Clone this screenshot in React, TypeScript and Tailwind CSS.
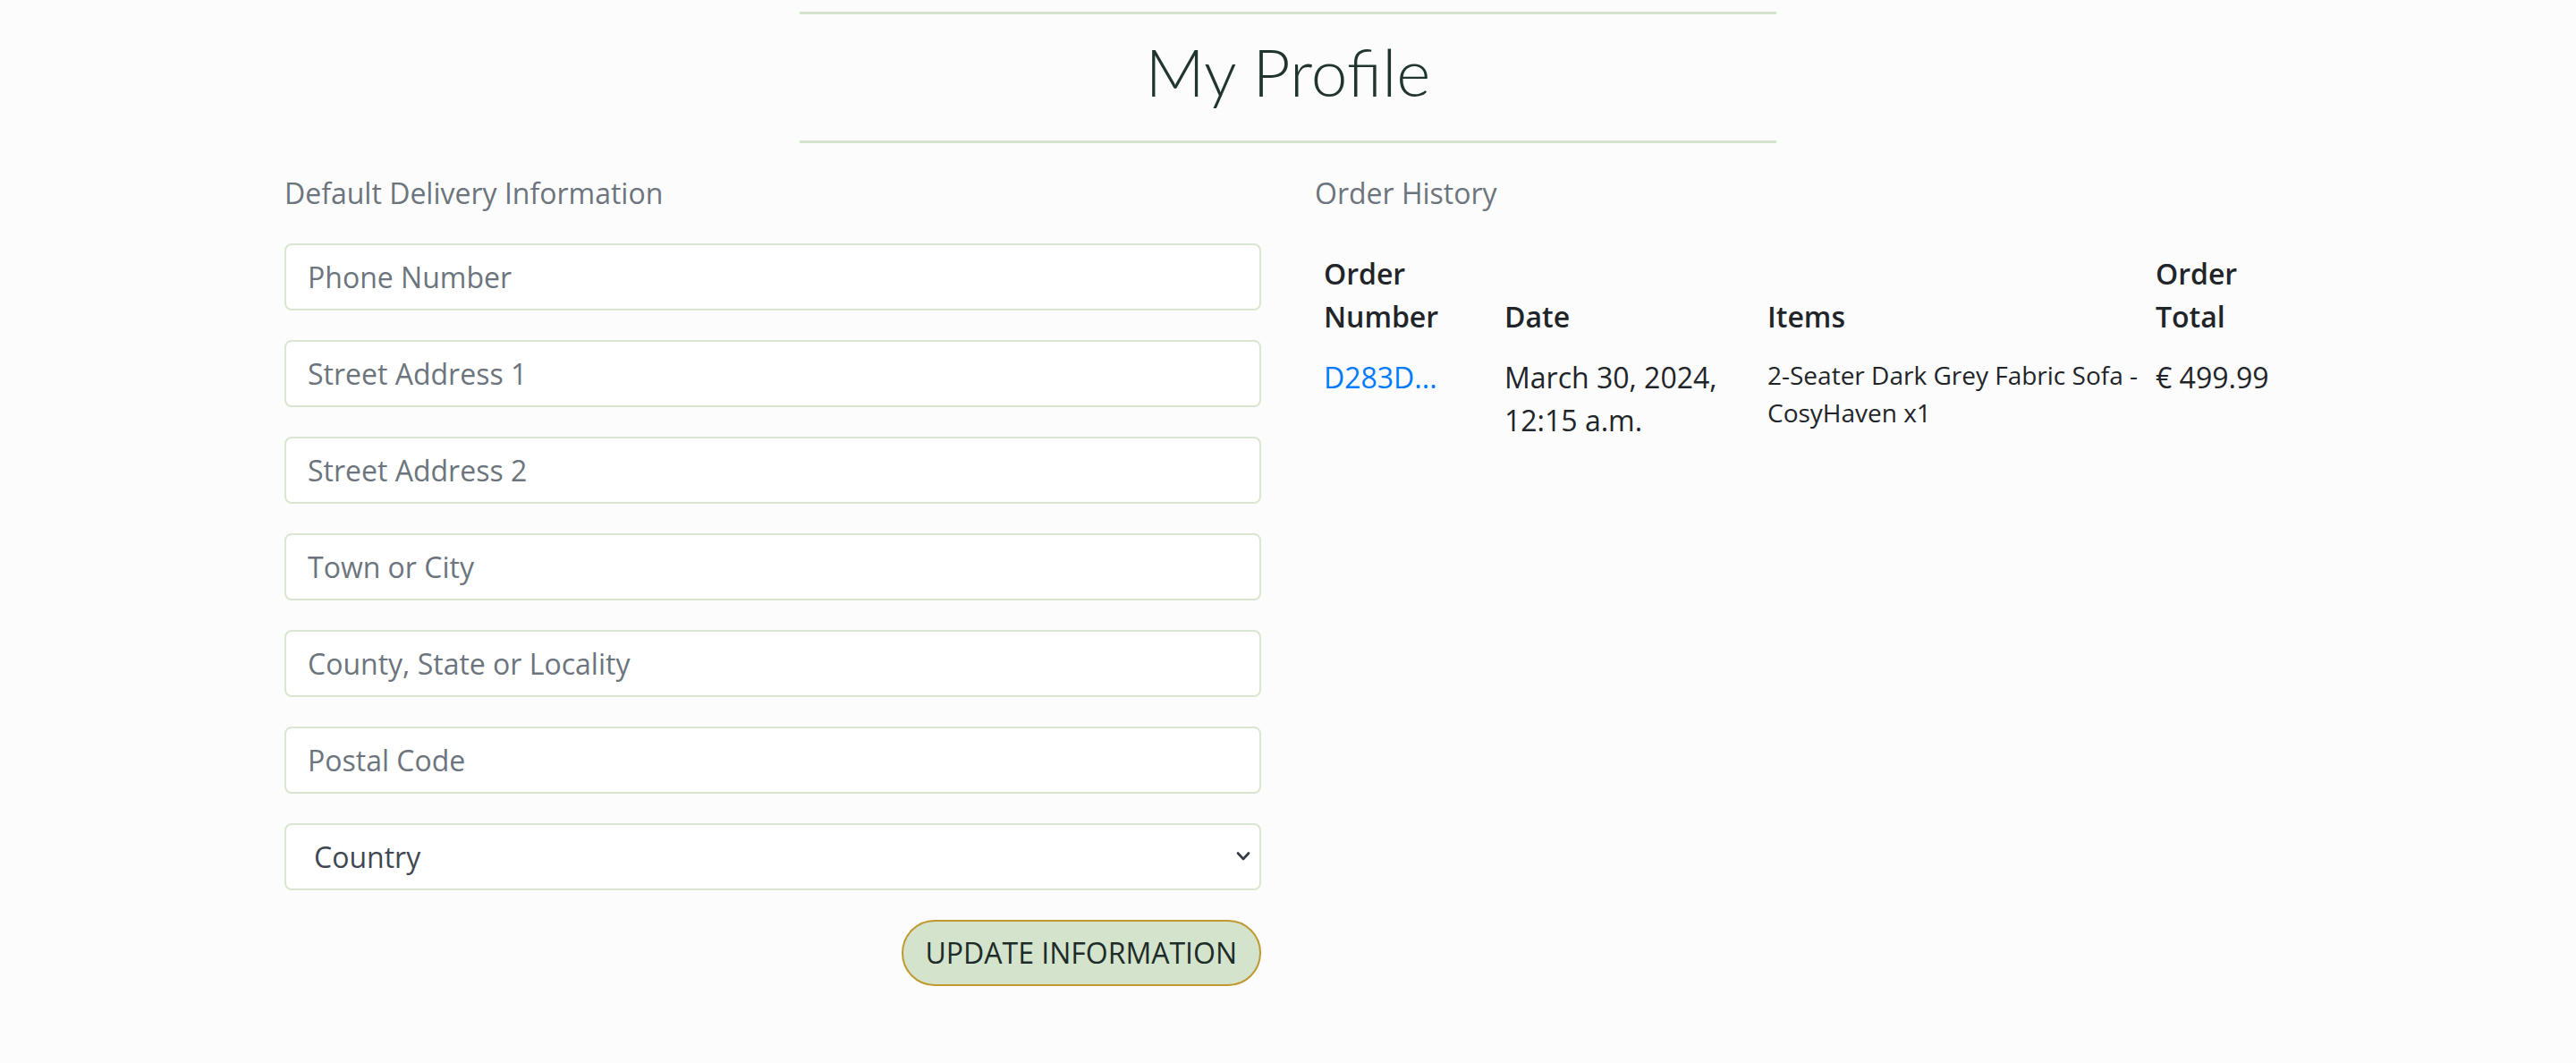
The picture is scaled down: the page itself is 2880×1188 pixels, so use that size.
import React from "react"

const fields = [
  "Phone Number",
  "Street Address 1",
  "Street Address 2",
  "Town or City",
  "County, State or Locality",
  "Postal Code",
]

function ProfileForm() {
  return (
    <div className="px-[30px]">
      <p className="text-[32px] leading-[48px] text-[#6c757d] mb-[32px]">Default Delivery Information</p>
      <form className="flex flex-col gap-[33px]">
        {fields.map((f) => (
          <input
            key={f}
            type="text"
            placeholder={f}
            className="h-[75px] w-full rounded-[8px] border-2 border-[#d9e6d1] bg-white pl-[24px] pr-[24px] text-[32px] leading-[48px] text-[#495057] placeholder:text-[#6c757d] outline-none"
          />
        ))}
        <div className="relative">
          <select
            defaultValue=""
            className="h-[75px] w-full appearance-none rounded-[8px] border-2 border-[#d9e6d1] bg-white pl-[31px] pr-[48px] text-[32px] leading-[48px] text-[#3f4852] outline-none"
          >
            <option value="">Country</option>
          </select>
          {/* chevron */}
          <svg
            className="pointer-events-none absolute right-[12px] top-[31px]"
            width="16"
            height="12"
            viewBox="0 0 16 12"
            fill="none"
          >
            <path d="M2 2.5 L8 9 L14 2.5" stroke="#343a40" strokeWidth="2.6" strokeLinecap="round" strokeLinejoin="round" />
          </svg>
        </div>
        <div className="flex justify-end">
          <button
            type="button"
            className="h-[74px] rounded-full border-2 border-[#bf982f] bg-[#d4e3cc] px-[25px] text-[32px] leading-[48px] text-[#1d2c29]"
          >
            UPDATE INFORMATION
          </button>
        </div>
      </form>
    </div>
  )
}

function OrderHistory() {
  return (
    <div className="px-[30px]">
      <p className="text-[32px] leading-[48px] text-[#6c757d] mb-[32px]">Order History</p>
      <table className="w-full border-collapse text-[32px] leading-[48px] text-[#212529]">
        <thead>
          <tr>
            <th className="w-[202px] px-[10px] py-[10px] text-left align-bottom font-semibold">
              Order
              <br />
              Number
            </th>
            <th className="w-[294px] px-[10px] py-[10px] text-left align-bottom font-semibold">Date</th>
            <th className="w-[434px] px-[10px] py-[10px] text-left align-bottom font-semibold">Items</th>
            <th className="px-[10px] py-[10px] text-left align-bottom font-semibold">
              Order
              <br />
              Total
            </th>
          </tr>
        </thead>
        <tbody>
          <tr>
            <td className="px-[10px] py-[10px] align-top">
              <a href="#" className="text-[#007bff]">
                D283D...
              </a>
            </td>
            <td className="px-[10px] py-[10px] align-top whitespace-nowrap">
              March 30, 2024,
              <br />
              12:15 a.m.
            </td>
            <td className="px-[10px] py-[10px] align-top text-[28px] leading-[42px] whitespace-nowrap">
              2-Seater Dark Grey Fabric Sofa -
              <br />
              CosyHaven x1
            </td>
            <td className="px-[10px] py-[10px] align-top whitespace-nowrap">€ 499.99</td>
          </tr>
        </tbody>
      </table>
    </div>
  )
}

export default function App() {
  return (
    <div className="min-h-[1188px] w-full bg-[#fcfcfc] font-['Open_Sans',sans-serif]">
      <div className="flex justify-center pt-[13px]">
        <div className="w-[1092px]">
          <div className="h-[3px] bg-[#d4e3cb]" />
          <div className="pt-[22px] pb-[35px] text-center">
            <h1 className="font-['Lato',sans-serif] text-[73px] font-light leading-[84px] text-[#1f352d]">My Profile</h1>
          </div>
          <div className="h-[3px] bg-[#d4e3cb]" />
        </div>
      </div>
      <div className="mx-auto grid w-[2304px] grid-cols-2 pt-[32px]">
        <ProfileForm />
        <OrderHistory />
      </div>
    </div>
  )
}
